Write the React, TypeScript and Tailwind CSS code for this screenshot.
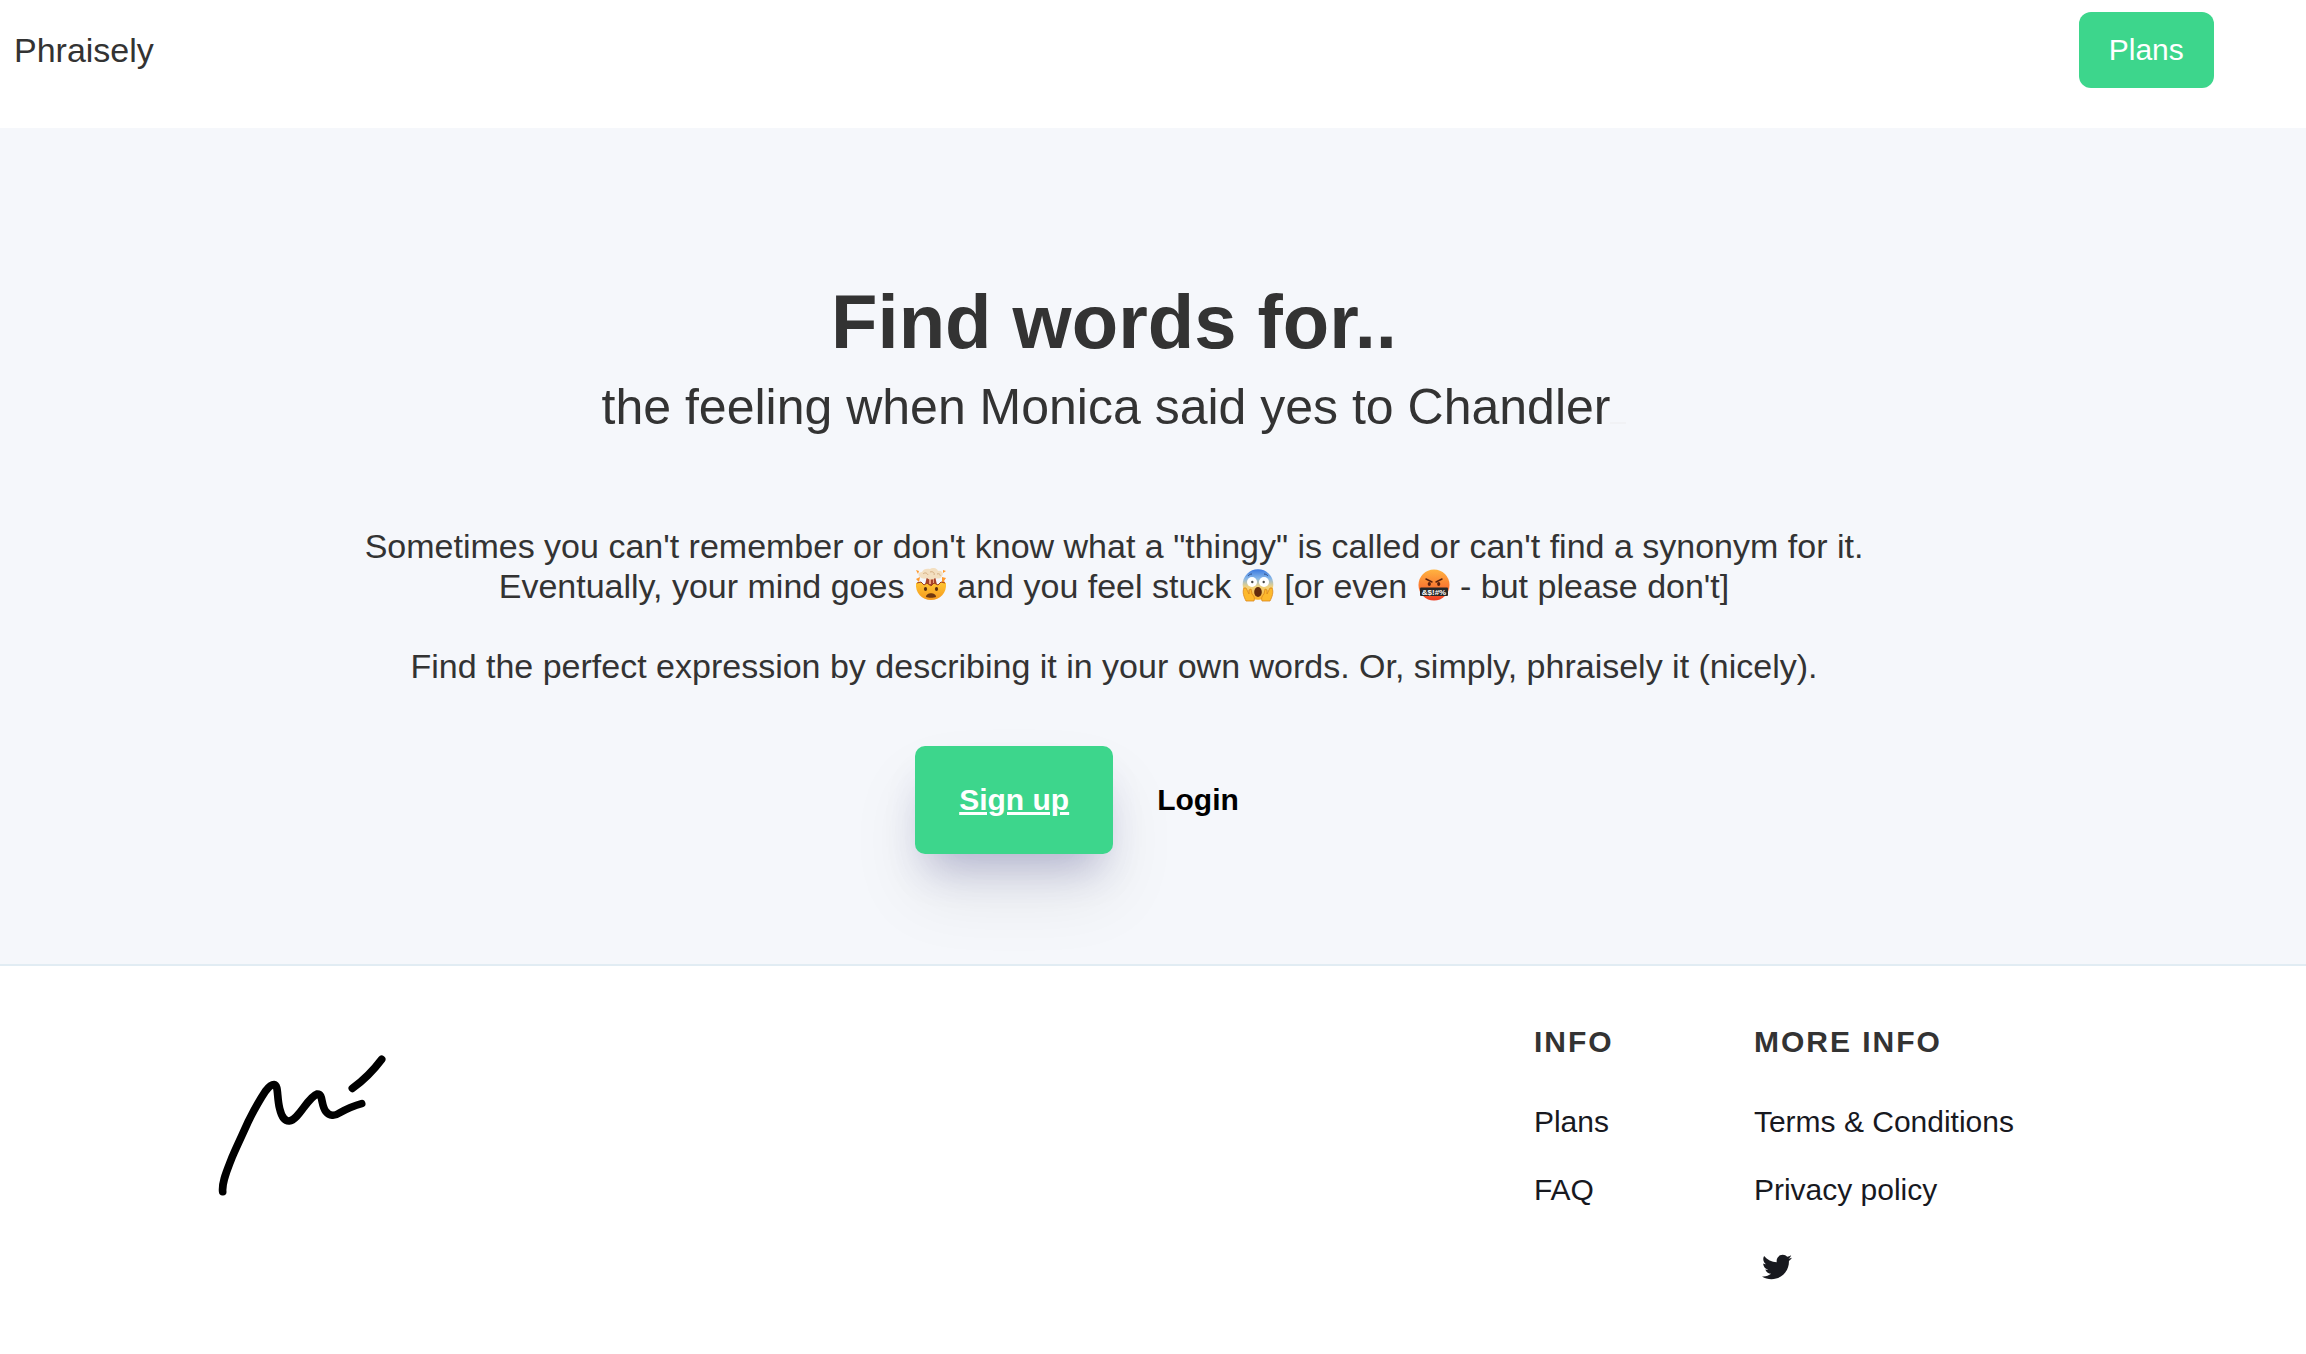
import type { ReactNode } from 'react'
import { FaTwitter } from 'react-icons/fa'

interface FooterLink {
  label: string
  href: string
}

const infoLinks: FooterLink[] = [
  { label: 'Plans', href: '#plans' },
  { label: 'FAQ', href: '#faq' },
]

const moreInfoLinks: FooterLink[] = [
  { label: 'Terms & Conditions', href: '#terms' },
  { label: 'Privacy policy', href: '#privacy' },
]

function Emoji({ label, children }: { label: string; children: ReactNode }) {
  return (
    <svg
      role="img"
      aria-label={label}
      viewBox="0 0 34 34"
      className="inline-block h-[34px] w-[34px] align-[-4px]"
    >
      {children}
    </svg>
  )
}

function ExplodingHead() {
  return (
    <Emoji label="exploding head">
      <defs>
        <linearGradient id="boom-face" x1="0" y1="0" x2="0" y2="1">
          <stop offset="0" stopColor="#ffc633" />
          <stop offset="1" stopColor="#f59a1f" />
        </linearGradient>
      </defs>
      <path d="M2 2l3 1-1 3zM29 2l3 1-3 2zM2 11l4-2-1 5zM28 9l4 1-2 3 2 3-4-2z" fill="#ff9a2e" />
      <path d="M13 8h8l2 9H11z" fill="#a8432a" />
      <path d="M15 9h2v7h-2zM19 9h1v6h-1z" fill="#f0a27a" />
      <path
        d="M6 9c-3-2-1-5 2-5 1-3 5-4 8-3 3-2 7-1 8 2 4-1 6 3 4 5-1 3-5 3-7 2-2 2-6 2-8 0-2 1-5 1-7-1z"
        fill="#f3dfc0"
      />
      <path d="M9 6c2-2 4-1 5 1M16 4c3-1 5 1 4 3M23 6c2-1 4 1 3 2" fill="none" stroke="#d3ae82" strokeWidth="1" />
      <path
        d="M2 15l5-1 3 3 3-2 4 3 3-3 4 2 3-3 5 1c1 10-6 17-15 17S1 25 2 15z"
        fill="url(#boom-face)"
      />
      <path d="M3 15l4-1 3 3 3-2 4 3 3-3 4 2 3-3 4 1" fill="none" stroke="#9d3c1b" strokeWidth="1" />
      <ellipse cx="11.5" cy="21" rx="1.6" ry="1.9" fill="#5a2e10" />
      <ellipse cx="22.5" cy="21" rx="1.6" ry="1.9" fill="#5a2e10" />
      <path d="M12 29c0-5 10-5 10 0-2 1-8 1-10 0z" fill="#70380f" />
    </Emoji>
  )
}

function ScreamingFace() {
  return (
    <Emoji label="face screaming in fear">
      <defs>
        <linearGradient id="scream-face" x1="0" y1="0" x2="0" y2="1">
          <stop offset="0" stopColor="#3978e0" />
          <stop offset="0.3" stopColor="#86b6e8" />
          <stop offset="0.58" stopColor="#f2d27a" />
          <stop offset="1" stopColor="#fbb024" />
        </linearGradient>
      </defs>
      <circle cx="17" cy="16.5" r="15.3" fill="url(#scream-face)" />
      <circle cx="11" cy="14" r="5" fill="#fff" />
      <circle cx="23" cy="14" r="5" fill="#fff" />
      <circle cx="11.3" cy="14" r="1.2" fill="#4a4a4a" />
      <circle cx="22.7" cy="14" r="1.2" fill="#4a4a4a" />
      <path d="M7 8c1-1 2-2 4-2M27 8c-1-1-2-2-4-2" fill="none" stroke="#2f4f88" strokeWidth="1" />
      <ellipse cx="17" cy="24" rx="3.8" ry="5" fill="#632c0d" />
      <path
        d="M3 20c-2 4 0 9 2 13h8c1-3 0-5-2-7l-1-5-2 1v4l-3-6zM31 20c2 4 0 9-2 13h-8c-1-3 0-5 2-7l1-5 2 1v4l3-6z"
        fill="#fdb92c"
        stroke="#dc861b"
        strokeWidth="0.8"
      />
    </Emoji>
  )
}

function CursingFace() {
  return (
    <Emoji label="face with symbols on mouth">
      <defs>
        <linearGradient id="cursing-face" x1="0" y1="0" x2="0" y2="1">
          <stop offset="0" stopColor="#ffb340" />
          <stop offset="0.55" stopColor="#fb7a32" />
          <stop offset="1" stopColor="#ee3d24" />
        </linearGradient>
      </defs>
      <circle cx="17" cy="17" r="15.5" fill="url(#cursing-face)" />
      <path d="M9 11l6 3M25 11l-6 3" stroke="#5b220e" strokeWidth="1.5" strokeLinecap="round" />
      <ellipse cx="12.3" cy="16" rx="1.6" ry="2" fill="#5b220e" />
      <ellipse cx="21.7" cy="16" rx="1.6" ry="2" fill="#5b220e" />
      <rect x="3" y="19.5" width="28" height="8.5" rx="1" fill="#262626" />
      <text
        x="17"
        y="26.8"
        textAnchor="middle"
        fontSize="8"
        fontWeight="700"
        fill="#fff"
      >
        {'&$!#%'}
      </text>
    </Emoji>
  )
}

function Header() {
  return (
    <header className="flex h-32 items-start justify-between bg-white pt-3 pr-[4%] pl-3.5">
      <a href="#" className="flex h-[76px] items-center text-[34px] leading-10">
        Phraisely
      </a>
      <a
        href="#plans"
        className="flex h-[76px] items-center rounded-xl bg-[#3dd68c] px-[30px] text-3xl text-white"
      >
        Plans
      </a>
    </header>
  )
}

function Hero() {
  return (
    <section className="flex flex-col items-center border-b-2 border-[#e1ecf3] bg-[#f5f7fb] pt-[156px] pr-[78px] pb-[110px] text-center">
      <h1 className="text-[76px] leading-[76px] font-bold">Find words for..</h1>
      <p className="mt-[17px] text-[50px] leading-[60px]">
        the feeling when Monica said yes to Chandler
        {/* Typewriter caret, almost faded out */}
        <span className="inline-block h-0.5 w-4 bg-[#f1f2f5]" />
      </p>

      <p className="mt-[89px] text-[34px] leading-10">
        Sometimes you can't remember or don't know what a "thingy" is called or can't find a synonym for it.
        <br />
        Eventually, your mind goes <ExplodingHead /> and you feel stuck <ScreamingFace /> [or even{' '}
        <CursingFace /> - but please don't]
        <br />
        <br />
        Find the perfect expression by describing it in your own words. Or, simply, phraisely it (nicely).
      </p>

      <div className="mt-[60px] flex items-center pr-[30px] text-3xl font-bold">
        <a
          href="#signup"
          className="flex h-[108px] items-center rounded-[10px] bg-[#3dd68c] px-11 text-white underline shadow-[0_40px_70px_rgba(0,0,0,0.08),0_26px_40px_-14px_rgba(50,50,147,0.28)]"
        >
          Sign up
        </a>
        <a href="#login" className="flex h-[108px] items-center px-11 text-black">
          Login
        </a>
      </div>
    </section>
  )
}

function Signature() {
  return (
    <svg
      role="img"
      aria-label="Signature"
      viewBox="0 -18 660 588"
      className="h-[196px] w-[220px]"
      fill="none"
      stroke="#000"
      strokeWidth="23"
      strokeLinecap="round"
      strokeLinejoin="round"
    >
      <path d="M68 485C65 455 82 420 97 380C112 345 130 308 146 272C160 244 180 208 196 184C208 168 216 164 222 164C236 165 230 200 239 236C245 262 256 274 268 273C296 270 322 202 352 192C370 191 362 226 378 245C388 258 404 259 418 249C438 238 466 226 485 221" />
      <path d="M457 175C492 150 518 124 545 88" />
    </svg>
  )
}

function FooterColumn({ title, links, children }: { title: string; links: FooterLink[]; children?: ReactNode }) {
  return (
    <div>
      <h2 className="text-3xl font-bold tracking-[2px] uppercase">{title}</h2>
      <ul className="mt-11 flex flex-col gap-8 text-3xl text-[#18191f]">
        {links.map((link) => (
          <li key={link.label}>
            <a href={link.href}>{link.label}</a>
          </li>
        ))}
      </ul>
      {children}
    </div>
  )
}

function Footer() {
  return (
    <footer className="flex justify-between bg-white pt-[58px] pr-[292px] pb-16 pl-[200px]">
      <Signature />
      <div className="grid grid-cols-[220px_auto]">
        <FooterColumn title="Info" links={infoLinks} />
        <FooterColumn title="More info" links={moreInfoLinks}>
          <a href="#twitter" aria-label="Twitter" className="mt-11 ml-2 inline-block text-[#18191f]">
            <FaTwitter className="h-[30px] w-[30px]" />
          </a>
        </FooterColumn>
      </div>
    </footer>
  )
}

export default function App() {
  return (
    <div className="min-h-screen bg-white font-['Liberation_Sans',Arial,sans-serif] text-[#333]">
      <Header />
      <main>
        <Hero />
      </main>
      <Footer />
    </div>
  )
}
